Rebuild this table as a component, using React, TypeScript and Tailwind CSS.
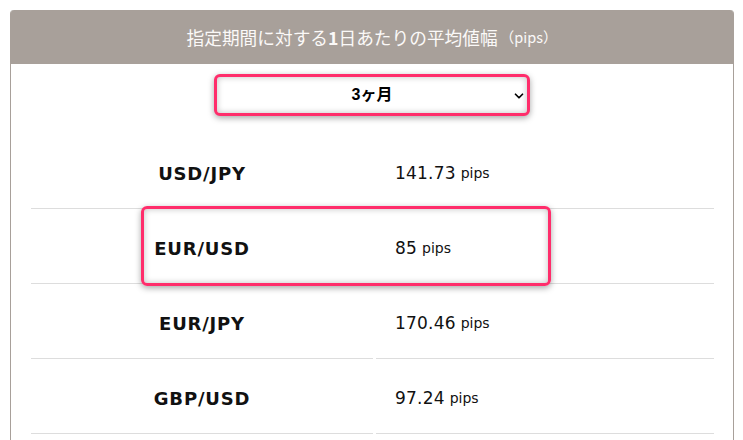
import { ChevronDown } from 'lucide-react';

type Row = { pair: string; value: string };

const rows: Row[] = [
  { pair: 'USD/JPY', value: '141.73' },
  { pair: 'EUR/USD', value: '85' },
  { pair: 'EUR/JPY', value: '170.46' },
  { pair: 'GBP/USD', value: '97.24' },
];

const App = () => {
  return (
    <div className="w-[743px] h-[440px] overflow-hidden bg-white pt-[10px] pl-[10px] pr-[9px] text-[#222] font-['Verdana','DejaVu_Sans','Noto_Sans_CJK_JP',sans-serif]">
      <div className="rounded-t-[4px] border-x border-[#a8a09a] h-[500px]">
        {/* ヘッダー */}
        <div className="h-[54px] bg-[#a8a09a] rounded-t-[3px] flex items-center justify-center text-[#fbf9f8] text-[17.7px] font-['Noto_Sans_CJK_JP',sans-serif]">
          <span>指定期間に対する<b className="font-bold">1</b>日あたりの平均値幅</span>
          <span className="text-[14.5px] ml-[2px]">（pips）</span>
        </div>

        <div className="relative">
          {/* 期間セレクト */}
          <div className="flex justify-center pt-[10px]">
            <div className="w-[316px] h-[42px] border-[3px] border-[#ff2d6b] rounded-[6px] shadow-[0_2px_6px_rgba(0,0,0,0.35),inset_0_0_6px_rgba(0,0,0,0.25)] bg-white flex items-center relative">
              <span className="flex-1 text-center text-[16px] font-bold text-black font-['Liberation_Sans','Noto_Sans_CJK_JP',sans-serif]">3ヶ月</span>
              <ChevronDown className="absolute right-[1px] top-[12px] w-[14px] h-[14px] text-black" strokeWidth={3} />
            </div>
          </div>

          {/* 通貨ペア一覧 */}
          <div className="mx-[20px] mt-[18px] grid grid-cols-[342px_338px] gap-x-[3px]">
            {rows.map((r) => (
              <div key={r.pair} className="contents">
                <div className="h-[75px] pt-[5px] border-b border-[#dddddd] flex items-center justify-center font-bold text-[18px] tracking-[0.8px] text-[#111]">
                  {r.pair}
                </div>
                <div className="h-[75px] pt-[5px] border-b border-[#dddddd] flex items-center pl-[19px] text-[17px] tracking-[0.2px] text-[#111]">
                  {r.value}
                  <span className="text-[14px] tracking-normal ml-[5px]">pips</span>
                </div>
              </div>
            ))}
          </div>

          {/* 注目枠 */}
          <div className="absolute left-[130px] top-[142px] w-[410px] h-[80px] border-[3px] border-[#ff2d6b] rounded-[6px] shadow-[0_2px_6px_rgba(0,0,0,0.35),inset_0_0_6px_rgba(0,0,0,0.25)]" />
        </div>
      </div>
    </div>
  );
};

export default App;
